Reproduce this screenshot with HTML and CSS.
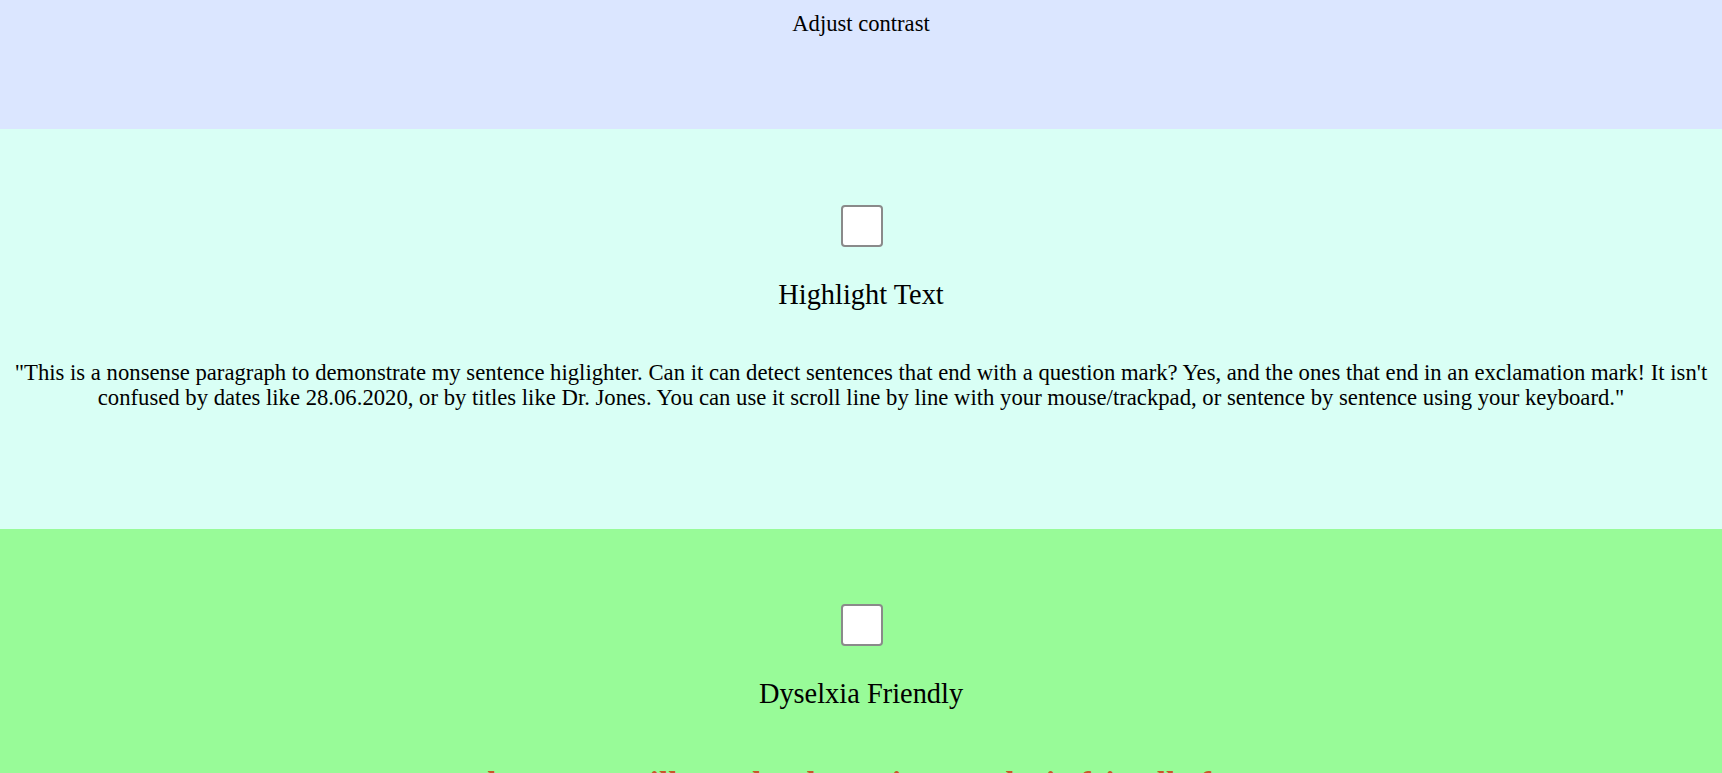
FILE: index.html
```html
<!DOCTYPE html>
<html lang="en">
<head>
<meta charset="utf-8">
<title>Reading tools</title>
<link rel="stylesheet" href="styles.css">
</head>
<body>
  <section class="panel panel-contrast">
    <p class="panel-title">Adjust contrast</p>
  </section>
  <section class="panel panel-highlight">
    <input type="checkbox" class="toggle" aria-label="Highlight Text">
    <h2 class="toggle-label">Highlight Text</h2>
    <p class="sample">"This is a nonsense paragraph to demonstrate my sentence higlighter. Can it can detect sentences that end with a question mark? Yes, and the ones that end in an exclamation mark! It isn't confused by dates like 28.06.2020, or by titles like Dr. Jones. You can use it scroll line by line with your mouse/trackpad, or sentence by sentence using your keyboard."</p>
  </section>
  <section class="panel panel-dyslexia">
    <input type="checkbox" class="toggle" aria-label="Dyselxia Friendly">
    <h2 class="toggle-label">Dyselxia Friendly</h2>
    <h3 class="demo">The screen will now be shown in a Dyslexia friendly font</h3>
  </section>
</body>
</html>
```
FILE: styles.css
```css
html, body {
  margin: 0;
  padding: 0;
}
body {
  font-family: "Liberation Serif", "Times New Roman", serif;
  color: #000;
  overflow: hidden;
}
.panel {
  display: flex;
  flex-direction: column;
  align-items: center;
  box-sizing: border-box;
  padding: 0 8px;
  text-align: center;
}
.panel-contrast {
  background: #dbe6ff;
  height: 129px;
  padding-top: 11px;
}
.panel-highlight {
  background: #d9fff5;
  height: 400px;
  padding-top: 76px;
}
.panel-dyslexia {
  background: #98fb98;
  padding-top: 75px;
  height: 400px;
}
.panel-title {
  margin: 0;
  font-size: 22.6px;
  line-height: 25px;
  font-weight: normal;
}
.toggle {
  -webkit-appearance: none;
  appearance: none;
  margin: 0 0 0 2px;
  width: 42px;
  height: 42px;
  box-sizing: border-box;
  border: 2px solid #8a8a8a;
  border-radius: 4px;
  background: #fff;
}
.toggle-label {
  margin: 32px 0 0;
  font-size: 28.4px;
  line-height: 32px;
  font-weight: normal;
}
.sample {
  margin: 49px 0 0;
  font-size: 22.7px;
  line-height: 25px;
}
.demo {
  margin: 55px 0 0;
  font-size: 33px;
  line-height: 38px;
  font-weight: bold;
  color: #c9562a;
}
```
